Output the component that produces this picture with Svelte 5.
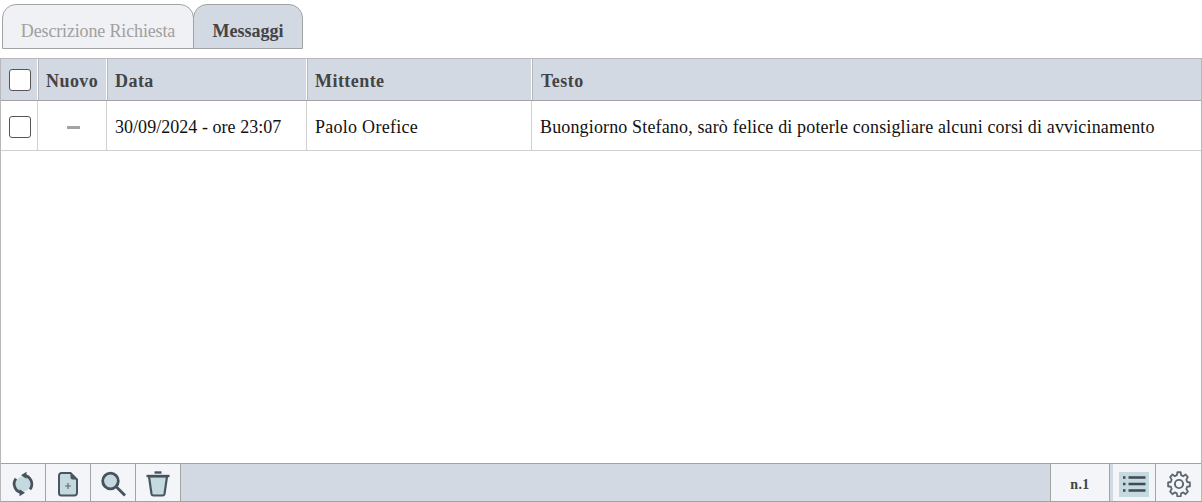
<script>
  const columns = [
    { label: 'Nuovo', cls: 'nuovo' },
    { label: 'Data', cls: 'data' },
    { label: 'Mittente', cls: 'mittente' },
    { label: 'Testo', cls: 'testo' }
  ];
</script>

<div class="page">
  <nav class="tabs">
    <div class="tab inactive">Descrizione Richiesta</div>
    <div class="tab active">Messaggi</div>
  </nav>

  <section class="panel">
    <div class="row head">
      <div class="cell check"><span class="box"></span></div>
      {#each columns as c}
        <div class="cell {c.cls}">{c.label}</div>
      {/each}
    </div>
    <div class="row body">
      <div class="cell check"><span class="box"></span></div>
      <div class="cell nuovo center"><span class="dash"></span></div>
      <div class="cell data">30/09/2024 - ore 23:07</div>
      <div class="cell mittente">Paolo Orefice</div>
      <div class="cell testo">Buongiorno Stefano, sarò felice di poterle consigliare alcuni corsi di avvicinamento</div>
    </div>
    <div class="spacer"></div>
    <footer class="bar">
      <button class="tool" aria-label="Aggiorna">
        <svg width="26" height="26" viewBox="0 0 26 26" fill="none">
          <circle cx="13" cy="13" r="7.500" fill="#c5dade"/>
          <path d="M13.500 4.300A8.700 8.700 0 0 1 20 18.300" stroke="#47525f" stroke-width="2.800"/>
          <path d="M12.500 21.700A8.700 8.700 0 0 1 6 7.700" stroke="#47525f" stroke-width="2.800"/>
          <path d="M16.500 .8V7.800L11 4.300z" fill="#47525f"/>
          <path d="M9.500 25.200V18.200L15 21.700z" fill="#47525f"/>
        </svg>
      </button>
      <button class="tool" aria-label="Nuovo">
        <svg width="24" height="26" viewBox="0 0 24 26" fill="none">
          <path d="M5.500 2h9L21 8.500V22a2.500 2.500 0 0 1-2.500 2.500h-13A2.500 2.500 0 0 1 3 22V4.500A2.500 2.500 0 0 1 5.500 2z" fill="#c5dade" stroke="#4a5563" stroke-width="2"/>
          <path d="M14.500 2v4.500a2 2 0 0 0 2 2H21z" fill="#4a5563"/>
          <path d="M12 12v6M9 15h6" stroke="#5f6b78" stroke-width="1.200"/>
        </svg>
      </button>
      <button class="tool" aria-label="Cerca">
        <svg width="26" height="26" viewBox="0 0 26 26" fill="none">
          <circle cx="10.500" cy="10" r="7.800" fill="#c5dade" stroke="#47525f" stroke-width="2.800"/>
          <path d="M16 15.500L25 24.500" stroke="#47525f" stroke-width="2.800"/>
        </svg>
      </button>
      <button class="tool" aria-label="Elimina">
        <svg width="26" height="28" viewBox="0 0 26 28" fill="none">
          <path d="M4 6.500l2.500 17.500a2 2 0 0 0 2 1.500h9a2 2 0 0 0 2-1.500L22 6.500z" fill="#c5dade" stroke="#4a5563" stroke-width="2.200"/>
          <path d="M1.500 6h23" stroke="#47525f" stroke-width="2.400"/>
          <path d="M9.500 2.500h7" stroke="#47525f" stroke-width="2.400"/>
        </svg>
      </button>
      <div class="fill"></div>
      <div class="count">n.1</div>
      <button class="tool list" aria-label="Elenco">
        <span class="listbg">
          <svg width="30" height="22" viewBox="0 0 30 22" fill="none" stroke="#3f4a57" stroke-width="2.600">
            <path d="M4 4.500h2.500M4 11h2.500M4 17.500h2.500M9.500 4.500h17M9.500 11h17M9.500 17.500h17"/>
          </svg>
        </span>
      </button>
      <button class="tool gear" aria-label="Impostazioni">
        <svg width="26" height="26" viewBox="0 0 24 24" fill="none" stroke="#5a6672" stroke-width="1.800" stroke-linejoin="round">
          <circle cx="12" cy="12" r="3.800"/>
          <path d="M10.300 1.700h3.400l.5 2.800 2.100.9 2.400-1.600 2.400 2.400-1.600 2.400.9 2.100 2.800.5v3.400l-2.800.5-.9 2.100 1.600 2.400-2.400 2.400-2.400-1.600-2.100.9-.5 2.800h-3.400l-.5-2.800-2.100-.9-2.400 1.600-2.400-2.400 1.600-2.400-.9-2.100-2.800-.5v-3.400l2.800-.5.9-2.100-1.600-2.400 2.400-2.400 2.400 1.600 2.100-.9z" transform="translate(1.200 -.6) scale(.9 1)"/>
        </svg>
      </button>
    </footer>
  </section>
</div>

<style>
  :global(body) { margin: 0; background: #fff; }
  .page {
    width: 1202px;
    height: 502px;
    display: flex;
    flex-direction: column;
    font-family: "Liberation Serif", "Times New Roman", serif;
    font-size: 18px;
    color: #111;
    box-sizing: border-box;
  }
  .tabs {
    display: flex;
    height: 45px;
    margin: 4px 0 9px 2px;
  }
  .tab {
    box-sizing: border-box;
    border: 1px solid #a3a3a3;
    border-radius: 14px 14px 0 0;
    display: flex;
    align-items: center;
    justify-content: center;
    padding-top: 10px;
  }
  .inactive { width: 192px; background: #eff1f5; color: #a0a0a0; letter-spacing: -.15px; }
  .active { width: 110px; margin-left: -1px; background: #d2d9e3; color: #444; font-weight: bold; }

  .panel {
    flex: 1;
    min-height: 0;
    display: flex;
    flex-direction: column;
    border: 1px solid #b8b8b8;
    border-bottom: 1px solid #a3a3a3;
  }
  .row { display: flex; box-sizing: border-box; }
  .head {
    height: 42px;
    background: #d2d9e3;
    border-bottom: 1px solid #a3a3a3;
    color: #444;
    font-weight: bold;
    letter-spacing: .45px;
  }
  .body { height: 50px; border-bottom: 1px solid #d0d0d0; }
  .cell {
    box-sizing: border-box;
    display: flex;
    align-items: center;
    padding-left: 8px;
    white-space: nowrap;
  }
  .head .cell { border-left: 1px solid #fff; padding-left: 8px; padding-top: 4px; box-shadow: inset 1px 0 0 #b8b8b8; }
  .head .check { border-left: 0; box-shadow: none; padding-top: 0; }
  .body .cell { border-left: 1px solid #d0d0d0; padding-top: 4px; }
  .body .check { border-left: 0; padding-top: 2px; }
  .check { width: 36px; }
  .nuovo { width: 69px; }
  .data { width: 200px; }
  .mittente { width: 225px; }
  .testo { flex: 1; }
  .head .testo { padding-left: 9px; }
  .body .data { letter-spacing: .04px; }
  .body .mittente { letter-spacing: .27px; }
  .body .testo { letter-spacing: .147px; }
  .body .center { justify-content: center; padding-left: 2px; padding-top: 3px; }
  .box {
    width: 22px;
    height: 22px;
    box-sizing: border-box;
    background: #fff;
    border: 1px solid #555;
    border-radius: 3px;
  }
  .dash { width: 13px; height: 3px; background: #a3a3a3; }
  .spacer { flex: 1; }
  .bar {
    height: 37px;
    display: flex;
    align-items: stretch;
    background: #d2d9e3;
    border-top: 1px solid #a3a3a3;
  }
  .tool {
    width: 45px;
    padding: 3px 0 0;
    border: 0;
    border-right: 1px solid #a3a3a3;
    background: #f4f5f8;
    display: flex;
    align-items: center;
    justify-content: center;
  }
  .fill { flex: 1; }
  .count {
    width: 60px;
    box-sizing: border-box;
    padding-top: 5px;
    border-left: 1px solid #a3a3a3;
    border-right: 1px solid #a3a3a3;
    background: #f4f5f8;
    color: #444;
    font-size: 14px;
    font-weight: bold;
    letter-spacing: .4px;
    display: flex;
    align-items: center;
    justify-content: center;
  }
  .list { width: 46px; border-left: 3px solid #d2d9e3; }
  .listbg { display: flex; background: #c5dade; width: 30px; height: 25px; align-items: center; justify-content: center; }
  .gear { border-right: 0; }
</style>
